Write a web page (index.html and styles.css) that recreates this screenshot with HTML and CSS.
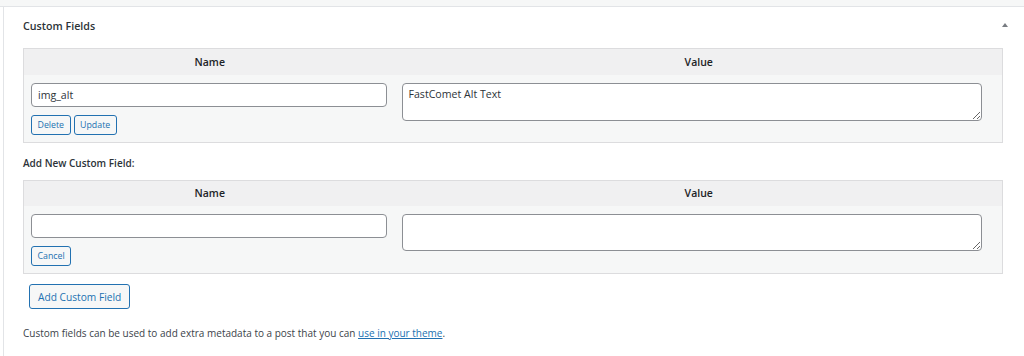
FILE: index.html
```html
<html>
<head>
  <title>Custom Fields</title>
  <link rel="stylesheet" href="styles.css">
</head>
<body>
  <div class="topbar"></div>

  <div class="postbox">
    <div class="postbox-header">
      <h2>Custom Fields</h2>
      <svg class="toggle" width="6" height="4" viewBox="0 0 6 4"><path d="M0 4 L3 0 L6 4 Z" fill="#787c82"/></svg>
    </div>

    <div class="inside">
      <table class="meta-table">
        <colgroup>
          <col class="col-name">
          <col class="col-value">
        </colgroup>
        <thead>
          <tr>
            <th>Name</th>
            <th>Value</th>
          </tr>
        </thead>
        <tbody>
          <tr>
            <td class="name-cell">
              <input type="text" value="img_alt">
              <div class="actions">
                <button class="btn-small">Delete</button>
                <button class="btn-small">Update</button>
              </div>
            </td>
            <td class="value-cell">
              <textarea class="value-big">FastComet Alt Text</textarea>
            </td>
          </tr>
        </tbody>
      </table>

      <p class="add-title">Add New Custom Field:</p>

      <table class="meta-table">
        <colgroup>
          <col class="col-name">
          <col class="col-value">
        </colgroup>
        <thead>
          <tr>
            <th>Name</th>
            <th>Value</th>
          </tr>
        </thead>
        <tbody>
          <tr>
            <td class="name-cell">
              <input type="text" value="">
              <div class="actions">
                <button class="btn-small btn-cancel">Cancel</button>
              </div>
            </td>
            <td class="value-cell">
              <textarea class="value-new"></textarea>
            </td>
          </tr>
        </tbody>
      </table>

      <div class="submit-row">
        <button class="btn">Add Custom Field</button>
      </div>

      <p class="help">Custom fields can be used to add extra metadata to a post that you can <a href="#">use in your theme</a>.</p>
    </div>
  </div>
</body>
</html>
```

FILE: styles.css
```css
body {
  margin: 0;
  background: #fff;
  font-family: 'Open Sans', 'Noto Sans', sans-serif;
  color: #3c434a;
  font-size: 10px;
}
.topbar {
  height: 6px;
  background: #f6f7f7;
  border-bottom: 1px solid #e2e4e7;
}
.postbox {
  margin-left: 3px;
  border-left: 1px solid #e2e4e7;
  min-height: 349px;
}
.postbox-header {
  display: flex;
  justify-content: space-between;
  align-items: center;
  height: 38px;
  padding: 0 16px 0 19px;
}
.postbox-header h2 {
  margin: 0;
  font-size: 10.7px;
  font-weight: 600;
  color: #2c3338;
}
.toggle {
  display: block;
  margin-top: -2px;
}
.inside {
  padding: 3px 21px 0 19px;
}
.meta-table {
  width: 980px;
  border-collapse: collapse;
  table-layout: fixed;
  border: 1px solid #dcdcde;
}
.col-name {
  width: 372px;
}
.meta-table th {
  background: #f0f0f1;
  height: 26px;
  padding: 0;
  font-size: 10.5px;
  font-weight: 600;
  color: #1d2327;
  text-align: center;
}
.meta-table td {
  background: #f6f7f7;
  vertical-align: top;
}
.name-cell {
  padding: 8px 9px 7px 7px;
}
.value-cell {
  padding: 8px 20px 7px 6px;
}
input, textarea {
  box-sizing: border-box;
  width: 100%;
  border: 1px solid #8c8f94;
  border-radius: 4px;
  background: #fff;
  font-family: inherit;
  font-size: 10.6px;
  color: #2c3338;
  margin: 0;
}
input {
  display: block;
  height: 24px;
  padding: 0 6px;
}
textarea {
  display: block;
  padding: 3px 6px;
  resize: vertical;
}
.value-big {
  height: 38px;
}
.value-new {
  height: 37px;
}
.actions {
  display: flex;
  gap: 3px;
  margin-top: 8px;
}
.btn-small, .btn {
  font-family: inherit;
  color: #2271b1;
  background: #f6f7f7;
  border: 1px solid #2271b1;
  border-radius: 3px;
  cursor: pointer;
  margin: 0;
}
.btn-small {
  height: 20px;
  padding: 0 5.5px;
  font-size: 8.8px;
}
.btn-cancel {
  width: 40px;
}
.add-title {
  margin: 0;
  height: 37px;
  line-height: 40px;
  font-weight: 600;
  font-size: 10px;
  color: #2c3338;
}
.submit-row {
  padding: 10px 0 0 6px;
}
.btn {
  height: 25px;
  padding: 0 8px;
  font-size: 10.2px;
}
.help {
  margin: 14px 0 0;
  line-height: 20px;
  font-size: 10px;
}
.help a {
  color: #2271b1;
}
```
